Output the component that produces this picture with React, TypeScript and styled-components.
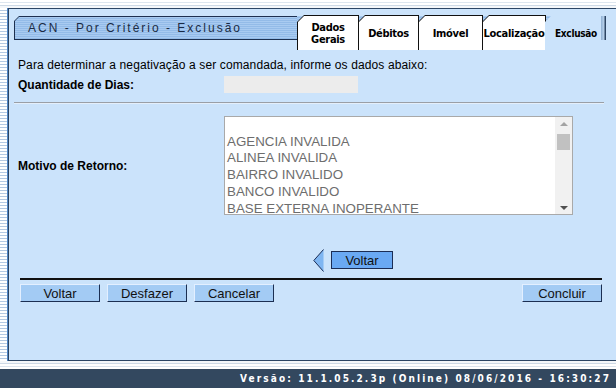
import React from 'react';
import styled, { createGlobalStyle } from 'styled-components';

const GlobalStyle = createGlobalStyle`
  html, body {
    margin: 0;
    padding: 0;
    background: #ffffff;
    overflow: hidden;
  }
  body {
    font-family: "Liberation Sans", Arial, sans-serif;
    font-size: 12px;
    color: #000;
  }
`;

const Page = styled.div`
  width: 616px;
  height: 388px;
  display: flex;
  flex-direction: column;
  overflow: hidden;
`;

const TopStrip = styled.div`
  height: 8px;
  flex: none;
  background: linear-gradient(
    180deg,
    #ffffff 0 2px,
    #dde6ef 2px 3px,
    #ffffff 3px 5px,
    #cdd9e6 5px 6px,
    #f4f7fa 6px 8px
  );
`;

const Middle = styled.div`
  flex: 1;
  display: flex;
  min-height: 0;
`;

const Sidebar = styled.div`
  width: 7px;
  flex: none;
  background: repeating-linear-gradient(180deg, #ffffff 0 2px, #b4c9e2 2px 3px);
  border-right: 1px solid #4f86c6;
`;

const Panel = styled.div`
  flex: 1;
  background: #cbe3fb;
  border: 1px solid #2c4564;
  border-right: none;
  padding: 6px 0 0 5px;
  display: flex;
  flex-direction: column;
`;

const HeaderRow = styled.div`
  display: flex;
  width: 591px;
  height: 35px;
`;

const stripe = `repeating-linear-gradient(180deg, #a9cbf1 0 1px, #93bbe8 1px 2px)`;

const TitleBar = styled.div`
  flex: 1;
  margin-top: 1px;
  height: 24px;
  background: #1d3050;
  clip-path: polygon(5px 0, 100% 0, 100% 100%, 0 100%, 0 5px);
  padding: 1px 0 1px 1px;
  box-sizing: border-box;
`;

const TitleFace = styled.div`
  height: 100%;
  background: ${stripe};
  clip-path: polygon(4px 0, 100% 0, 100% 100%, 0 100%, 0 4px);
  display: flex;
  align-items: center;
  padding-left: 13px;
  font-size: 12px;
  letter-spacing: 2px;
  color: #1b2b44;
`;

const Tabs = styled.div`
  display: flex;
  background: ${stripe};
  background-size: 100% 24px;
  background-position: 0 1px;
  background-repeat: no-repeat;
`;

const Tab = styled.div<{ $w: number; $active?: boolean }>`
  width: ${(p) => p.$w}px;
  height: 35px;
  box-sizing: border-box;
  background: ${(p) => (p.$active ? '#cbe3fb' : '#111')};
  clip-path: polygon(7px 0, 100% 0, 100% 100%, 0 100%, 0 7px);
  padding: 1px ${(p) => (p.$active ? '0' : '1px')} 0 1px;
  margin-right: -1px;
`;

const TabFace = styled.div<{ $active?: boolean }>`
  height: 100%;
  background: ${(p) =>
    p.$active
      ? 'linear-gradient(90deg, #cbe3fb 0 calc(100% - 5px), #8fb0d3 calc(100% - 5px), #b9d2ec calc(100% - 2px), #2c4564 calc(100% - 1px)) 0 0 / 100% 24px no-repeat, #cbe3fb'
      : '#ffffff'};
  clip-path: polygon(6px 0, 100% 0, 100% 100%, 0 100%, 0 6px);
  display: flex;
  align-items: center;
  justify-content: center;
  text-align: center;
  font-family: "Liberation Sans Narrow", "DejaVu Sans Condensed", sans-serif;
  font-weight: bold;
  font-size: ${(p) => (p.$active ? '10px' : '11px')};
  letter-spacing: -0.3px;
  line-height: 12px;
  color: #000;
  padding-top: 2px;
  box-sizing: border-box;
`;

const Content = styled.div`
  padding-left: 4px;
  width: 586px;
  display: flex;
  flex-direction: column;
`;

const Intro = styled.div`
  margin-top: 8px;
  line-height: 14px;
  font-size: 12px;
  letter-spacing: 0.12px;
`;

const FormRow = styled.div<{ $gap: number }>`
  margin-top: ${(p) => p.$gap}px;
  display: grid;
  grid-template-columns: 206px 1fr;
  align-items: center;
`;

const Label = styled.div`
  font-weight: bold;
  font-size: 12px;
`;

const DaysInput = styled.div`
  width: 134px;
  height: 17px;
  background: #ececec;
`;

const Divider = styled.div`
  margin: 9px 0 0 -4px;
  width: 590px;
  height: 1px;
  background: #9a9fa6;
  border-bottom: 1px solid #e4effb;
`;

const ListBox = styled.div`
  width: 349px;
  height: 99px;
  box-sizing: border-box;
  background: #fff;
  border: 1px solid #a9a9a9;
  display: flex;
  overflow: hidden;
`;

const Options = styled.div`
  flex: 1;
  padding: 0 0 0 2px;
  font-size: 13.33px;
  line-height: 16.7px;
  color: #6d6d6d;
  white-space: nowrap;
  overflow: hidden;
`;

const ScrollBar = styled.div`
  width: 17px;
  flex: none;
  background: #f1f1f1;
  display: flex;
  flex-direction: column;
  align-items: center;
  padding: 5px 0 4px;
  box-sizing: border-box;
`;

const ScrollArrow = styled.div<{ $down?: boolean }>`
  width: 0;
  height: 0;
  border-left: 4px solid transparent;
  border-right: 4px solid transparent;
  ${(p) =>
    p.$down ? 'border-top: 4px solid #505050;' : 'border-bottom: 4px solid #a3a3a3;'}
`;

const Thumb = styled.div`
  width: 13px;
  height: 16px;
  background: #c1c1c1;
  margin-top: 8px;
  flex: none;
`;

const ScrollSpace = styled.div`
  flex: 1;
`;

const NavRow = styled.div`
  margin-top: 34px;
  padding-left: 295px;
  display: flex;
  align-items: center;
  height: 22px;
  gap: 7px;
`;

const NavButton = styled.div`
  width: 62px;
  height: 18px;
  box-sizing: border-box;
  background: #6aa9f3;
  border: 1px solid #1b2d55;
  display: flex;
  align-items: center;
  justify-content: center;
  font-size: 13px;
  color: #111;
`;

const BottomLine = styled.div`
  margin-top: 7px;
  margin-left: 2px;
  width: 582px;
  height: 2px;
  background: #111;
`;

const ButtonRow = styled.div`
  margin-top: 4px;
  display: flex;
  gap: 7px;
  padding-left: 2px;
  width: 582px;
`;

const Button = styled.div<{ $push?: boolean }>`
  width: 80px;
  height: 18px;
  box-sizing: border-box;
  background: #a3cbf4;
  border-top: 1px solid #e3efff;
  border-left: 1px solid #e3efff;
  border-right: 1px solid #1c2f52;
  border-bottom: 1px solid #1c2f52;
  display: flex;
  align-items: center;
  justify-content: center;
  font-size: 13px;
  color: #111;
  ${(p) => (p.$push ? 'margin-left: auto;' : '')}
`;

const BottomStrip = styled.div`
  height: 8px;
  flex: none;
  background: linear-gradient(
    180deg,
    #f4f7fa 0 2px,
    #cdd9e6 2px 3px,
    #ffffff 3px 5px,
    #dbe4ee 5px 6px,
    #ffffff 6px 8px
  );
`;

const Footer = styled.div`
  height: 19px;
  flex: none;
  background: #33485f;
  color: #fff;
  display: flex;
  align-items: center;
  justify-content: flex-end;
  padding-right: 5px;
  font-family: "DejaVu Sans Condensed", "DejaVu Sans", sans-serif;
  font-weight: bold;
  font-size: 10px;
  letter-spacing: 2.1px;
`;

const tabs = [
  { w: 62, label: ['Dados', 'Gerais'] },
  { w: 61, label: ['Débitos'] },
  { w: 65, label: ['Imóvel'] },
  { w: 64, label: ['Localização'] },
];

const motivos = [
  '',
  'AGENCIA INVALIDA',
  'ALINEA INVALIDA',
  'BAIRRO INVALIDO',
  'BANCO INVALIDO',
  'BASE EXTERNA INOPERANTE',
];

function BackArrow() {
  return (
    <svg width="11" height="23" viewBox="0 0 11 23">
      <polygon points="10.5,0.5 0.8,11.5 10.5,22.5" fill="#7fb6f2" />
      <polyline points="10.5,0.5 0.8,11.5 10.5,22.5" fill="none" stroke="#1b2d55" strokeWidth="1" />
    </svg>
  );
}

export default function App() {
  return (
    <Page>
      <GlobalStyle />
      <TopStrip />
      <Middle>
        <Sidebar />
        <Panel>
          <HeaderRow>
            <TitleBar>
              <TitleFace>ACN - Por Critério - Exclusão</TitleFace>
            </TitleBar>
            <Tabs>
              {tabs.map((t) => (
                <Tab key={t.label.join(' ')} $w={t.w}>
                  <TabFace>
                    <span>
                      {t.label.map((l, i) => (
                        <React.Fragment key={l}>
                          {i > 0 && <br />}
                          {l}
                        </React.Fragment>
                      ))}
                    </span>
                  </TabFace>
                </Tab>
              ))}
              <Tab $w={61} $active>
                <TabFace $active>Exclusão</TabFace>
              </Tab>
            </Tabs>
          </HeaderRow>
          <Content>
            <Intro>Para determinar a negativação a ser comandada, informe os dados abaixo:</Intro>
            <FormRow $gap={4}>
              <Label>Quantidade de Dias:</Label>
              <DaysInput />
            </FormRow>
            <Divider />
            <FormRow $gap={12}>
              <Label>Motivo de Retorno:</Label>
              <ListBox>
                <Options>
                  {motivos.map((m, i) => (
                    <div key={i}>{m || '\u00a0'}</div>
                  ))}
                </Options>
                <ScrollBar>
                  <ScrollArrow />
                  <Thumb />
                  <ScrollSpace />
                  <ScrollArrow $down />
                </ScrollBar>
              </ListBox>
            </FormRow>
            <NavRow>
              <BackArrow />
              <NavButton>Voltar</NavButton>
            </NavRow>
            <BottomLine />
            <ButtonRow>
              <Button>Voltar</Button>
              <Button>Desfazer</Button>
              <Button>Cancelar</Button>
              <Button $push>Concluir</Button>
            </ButtonRow>
          </Content>
        </Panel>
      </Middle>
      <BottomStrip />
      <Footer>Versão: 11.1.05.2.3p (Online) 08/06/2016 - 16:30:27</Footer>
    </Page>
  );
}
